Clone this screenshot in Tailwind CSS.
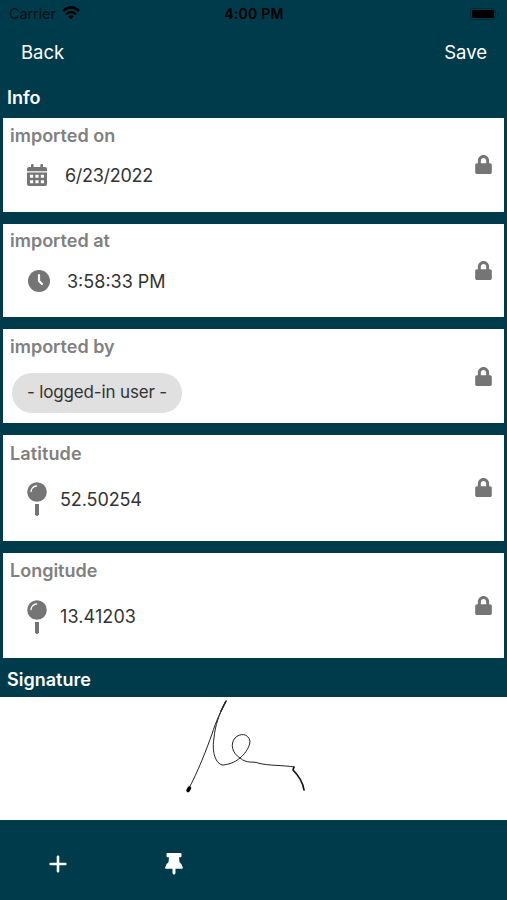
<!DOCTYPE html>
<html lang="en">
<head>
<meta charset="utf-8">
<title>Info</title>
<script src="https://cdn.jsdelivr.net/npm/@tailwindcss/browser@4"></script>
</head>
<body class="bg-[#003b4c]">
<svg class="hidden">
  <symbol id="lock" viewBox="0 0 448 512"><path d="M400 224h-24v-72C376 68.200 307.800 0 224 0S72 68.200 72 152v72H48c-26.500 0-48 21.500-48 48v192c0 26.500 21.500 48 48 48h352c26.500 0 48-21.500 48-48V272c0-26.500-21.500-48-48-48zm-104 0H152v-72c0-39.700 32.300-72 72-72s72 32.300 72 72v72z"/></symbol>
  <symbol id="pin" viewBox="0 0 20 34"><circle cx="10" cy="10" r="9.800"/><path d="M4 9.500A6 6 0 0 1 9.500 4" fill="none" stroke="#fff" stroke-width="1.400" stroke-linecap="round"/><path d="M8 22h4v10.500L10.700 34H9.300L8 32.500z"/></symbol>
</svg>
<div class="w-[507px] h-[900px] flex flex-col overflow-hidden font-['Inter',sans-serif] bg-[#003b4c] text-white">
  <header class="h-[28px] shrink-0 grid grid-cols-3 items-center pl-[9px] pr-[8px] text-[14px] leading-none text-black">
    <div class="flex items-center gap-[6px]"><span class="text-black/75 text-[14.500px] tracking-[-0.100px]">Carrier</span>
      <svg class="w-[18px] h-[14px] -mt-[3px]" viewBox="0 0 18 14" fill="none" stroke="#000" stroke-width="2.500"><path d="M1 5.200Q9-2.400 17 5.200M4 8.300Q9 3.700 14 8.300"/><path d="M6.200 10.400Q9 8 11.800 10.400L9 13.300z" fill="#000" stroke="none"/></svg>
    </div>
    <div class="text-center font-semibold tracking-[0.250px]">4:00 PM</div>
    <div class="flex justify-end items-center gap-px"><span class="w-[26px] h-[12px] rounded-[3px] border border-black/25 p-px flex"><span class="bg-black rounded-[1px] w-full"></span></span><span class="w-[1.500px] h-[4px] bg-black/20 rounded"></span></div>
  </header>
  <nav class="h-[49px] shrink-0 flex items-center justify-between pl-[21px] pr-[20px] text-[18.500px]"><span>Back</span><span>Save</span></nav>
  <h2 class="h-[41px] shrink-0 flex items-center px-[7px] text-[18px] font-semibold">Info</h2>
  <main class="flex flex-col gap-[12px] pl-[3px] pr-[3px]">
    <section class="h-[93.500px] bg-white flex items-center justify-between pr-[12px]">
      <div class="self-stretch pl-[7px] pt-[6px]">
        <div class="h-[24px] leading-[24px] text-[18px] font-semibold text-[#808080]">imported on</div>
        <div class="mt-[15px] pl-[17px] h-[24px] flex items-center text-[18px] text-[#333]">
          <svg class="w-[20px] h-[22px] mr-[18px]" viewBox="0 0 20 22" fill="#757575"><path fill-rule="evenodd" d="M2 3h2V.8q0-.8.800-.800h1q.800 0 .800.800V3h6.800V.8q0-.800.800-.800h1q.800 0 .800.800V3h2q2 0 2 2v2.200H0V5q0-2 2-2zM0 8.500h20V20q0 2-2 2H2q-2 0-2-2zM3 10.800v3h3.200v-3zm5.400 0v3h3.200v-3zm5.400 0v3H17v-3zM3 16.200v3h3.200v-3zm5.400 0v3h3.200v-3zm5.400 0v3H17v-3z"/></svg><span class="tracking-[-0.300px]">6/23/2022</span></div>
      </div>
      <svg class="w-[17px] h-[19px] -mt-px" fill="#757575"><use href="#lock"/></svg>
    </section>
    <section class="h-[93.500px] bg-white flex items-center justify-between pr-[12px]">
      <div class="self-stretch pl-[7px] pt-[5.500px]">
        <div class="h-[24px] leading-[24px] text-[18px] font-semibold text-[#808080]">imported at</div>
        <div class="mt-[16px] pl-[18px] h-[24px] flex items-center text-[18px] text-[#333]">
          <svg class="w-[22px] h-[22px] mr-[17px]" viewBox="0 0 22 22"><circle cx="11" cy="11" r="11" fill="#757575"/><path d="M11 5v6l3 3" fill="none" stroke="#fff" stroke-width="2.200" stroke-linecap="round" stroke-linejoin="round"/></svg><span>3:58:33 PM</span></div>
      </div>
      <svg class="w-[17px] h-[19px]" fill="#757575"><use href="#lock"/></svg>
    </section>
    <section class="h-[94px] bg-white flex items-center justify-between pr-[12px]">
      <div class="self-stretch pl-[7px] pt-[6px]">
        <div class="h-[24px] leading-[24px] text-[18px] font-semibold text-[#808080]">imported by</div>
        <div class="mt-[13.500px] ml-[2px] w-[170px] h-[40px] rounded-full bg-[#e0e0e0] flex items-center justify-center text-[17px] tracking-[-0.150px] text-[#333] whitespace-nowrap">- logged-in user -</div>
      </div>
      <svg class="w-[17px] h-[19px]" fill="#757575"><use href="#lock"/></svg>
    </section>
    <section class="h-[105.500px] bg-white flex items-center justify-between pr-[12px]">
      <div class="self-stretch pl-[7px] pt-[7px]">
        <div class="h-[24px] leading-[24px] text-[18px] font-semibold tracking-[0.100px] text-[#808080]">Latitude</div>
        <div class="mt-[16px] pl-[17px] h-[34px] flex items-center text-[18px] text-[#333]"><svg class="w-[20px] h-[34px] mr-[13px]" fill="#757575"><use href="#pin"/></svg><span class="tracking-[-0.100px]">52.50254</span></div>
      </div>
      <svg class="w-[17px] h-[19px]" fill="#757575"><use href="#lock"/></svg>
    </section>
    <section class="h-[105.500px] bg-white flex items-center justify-between pr-[12px]">
      <div class="self-stretch pl-[7px] pt-[6px]">
        <div class="h-[24px] leading-[24px] text-[18px] font-semibold text-[#808080]">Longitude</div>
        <div class="mt-[17px] pl-[17px] h-[34px] flex items-center text-[18px] text-[#333]"><svg class="w-[20px] h-[34px] mr-[13px]" fill="#757575"><use href="#pin"/></svg><span class="tracking-[0.100px]">13.41203</span></div>
      </div>
      <svg class="w-[17px] h-[19px]" fill="#757575"><use href="#lock"/></svg>
    </section>
  </main>
  <h2 class="h-[39px] shrink-0 flex items-center pt-[3px] px-[7px] text-[18px] font-semibold">Signature</h2>
  <div class="h-[123px] shrink-0 bg-white pl-[170px]">
    <svg class="w-[150px] h-[123px]" viewBox="0 7 150 123" fill="none" stroke="#222" stroke-width="1" stroke-linecap="round" stroke-linejoin="round"><path d="M18 100C28 82 37 58 42 44C46 31 51 21 56 11C49 24 45 36 44 48C41 66 48 75 53 75C62 74 66 71 70 68C76 63 80 56 80 51C78 43 70 43 65 48C60 54 62 63 70 68C77 74 83 71 88 73C98 76 114 75 124 77"/><path d="M124 77L123 80C129 86 133 93 134 100" stroke="#111" stroke-width="1.700"/><path d="M51 21L56 11" stroke-width="1.600"/><path d="M18 100.500L19.500 98" stroke="#000" stroke-width="3.500"/></svg>
  </div>
  <footer class="flex-1 flex items-center pl-[49px] gap-[98px] pt-[8px]">
    <svg class="w-[18px] h-[18px]" viewBox="0 0 18 18" stroke="#fff" stroke-width="2.600" stroke-linecap="round"><path d="M9 1.700v14.600M1.700 9h14.600"/></svg>
    <svg class="w-[18px] h-[22px]" viewBox="0 0 18 22" fill="#fff"><path d="M2.500 0h13q1 0 1 1v2.200q0 1-1 1H14l.5 5q3 1.700 3.400 5.500 0 1-1 1H10.500v4.500L9 22l-1.500-1.800v-4.500H1q-1 0-1-1 .5-3.800 3.500-5.500l.5-5H2.500q-1 0-1-1V1q0-1 1-1z"/></svg>
  </footer>
</div>
</body>
</html>
